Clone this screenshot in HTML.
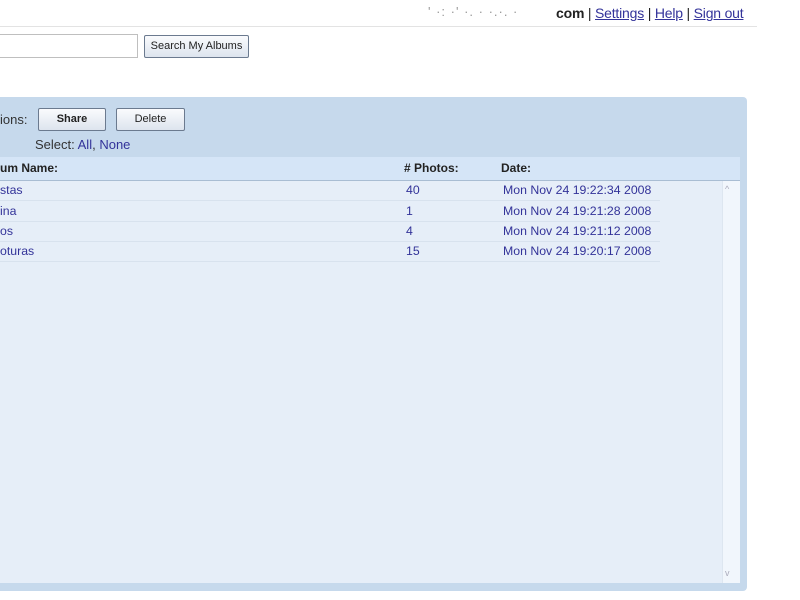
<!DOCTYPE html>
<html><head><style>
body{margin:0;width:800px;height:600px;background:#fff;font-family:"Liberation Sans",Arial,sans-serif;position:relative;overflow:hidden}
.a{position:absolute}
a{color:#33339a}
.btn{position:absolute;border:1px solid #6b7a8f;border-radius:2px;background:linear-gradient(#fafbfd,#dde4ee);font-size:11px;text-align:center;color:#222;box-sizing:border-box}
.row{position:absolute;left:0;width:660px;height:20px;border-bottom:1px solid #d8e2ee;font-size:12.3px;color:#333399;line-height:20px}
</style></head><body>
<div class="a" style="left:428px;top:4px;font-size:13px;color:#999;letter-spacing:1px">' ·: ·' ·. ·  ·.·. ·</div>
<div class="a" style="left:556px;top:5px;font-size:14px;color:#222;letter-spacing:-0.2px"><b>com</b> | <a style="text-decoration:underline">Settings</a> | <a style="text-decoration:underline">Help</a> | <a style="text-decoration:underline">Sign out</a></div>
<div class="a" style="left:0;top:26px;width:757px;height:1px;background:#e3e3e3"></div>
<div class="a" style="left:-2px;top:34px;width:140px;height:24px;border:1px solid #bfbfbf;box-sizing:border-box"></div>
<div class="btn" style="left:144px;top:35px;width:105px;height:23px;line-height:21px">Search My Albums</div>
<div class="a" style="left:-6px;top:97px;width:753px;height:494px;background:#c6d9ec;border-radius:4px"></div>
<div class="a" style="left:0;top:112px;font-size:13px;color:#333">ions:</div>
<div class="btn" style="left:38px;top:108px;width:68px;height:23px;line-height:21px;font-weight:bold">Share</div>
<div class="btn" style="left:116px;top:108px;width:69px;height:23px;line-height:21px">Delete</div>
<div class="a" style="left:35px;top:137px;font-size:13px;color:#333">Select: <a style="text-decoration:none">All</a>, <a style="text-decoration:none">None</a></div>
<div class="a" style="left:0;top:157px;width:740px;height:24px;background:#d5e5f7;border-bottom:1px solid #a9bdd3;box-sizing:border-box;font-size:12px;font-weight:bold;color:#222;line-height:23px">
<span class="a" style="left:0">um Name:</span><span class="a" style="left:404px">#&nbsp;Photos:</span><span class="a" style="left:501px">Date:</span></div>
<div class="a" style="left:0;top:181px;width:740px;height:402px;background:#e6eef8"></div>
<div class="a" style="left:722px;top:181px;width:17px;height:402px;background:#f1f6fc;border-left:1px solid #dde6f0"></div>
<div class="a" style="left:725px;top:184px;font-size:9px;color:#aab">^</div>
<div class="a" style="left:725px;top:568px;font-size:9px;color:#aab">v</div>
<div class="row" style="top:180px"><span class="a" style="left:0">stas</span><span class="a" style="left:406px">40</span><span class="a" style="left:503px">Mon Nov 24 19:22:34 2008</span></div>
<div class="row" style="top:201px"><span class="a" style="left:0">ina</span><span class="a" style="left:406px">1</span><span class="a" style="left:503px">Mon Nov 24 19:21:28 2008</span></div>
<div class="row" style="top:221px"><span class="a" style="left:0">os</span><span class="a" style="left:406px">4</span><span class="a" style="left:503px">Mon Nov 24 19:21:12 2008</span></div>
<div class="row" style="top:241px"><span class="a" style="left:0">oturas</span><span class="a" style="left:406px">15</span><span class="a" style="left:503px">Mon Nov 24 19:20:17 2008</span></div>
</body></html>
